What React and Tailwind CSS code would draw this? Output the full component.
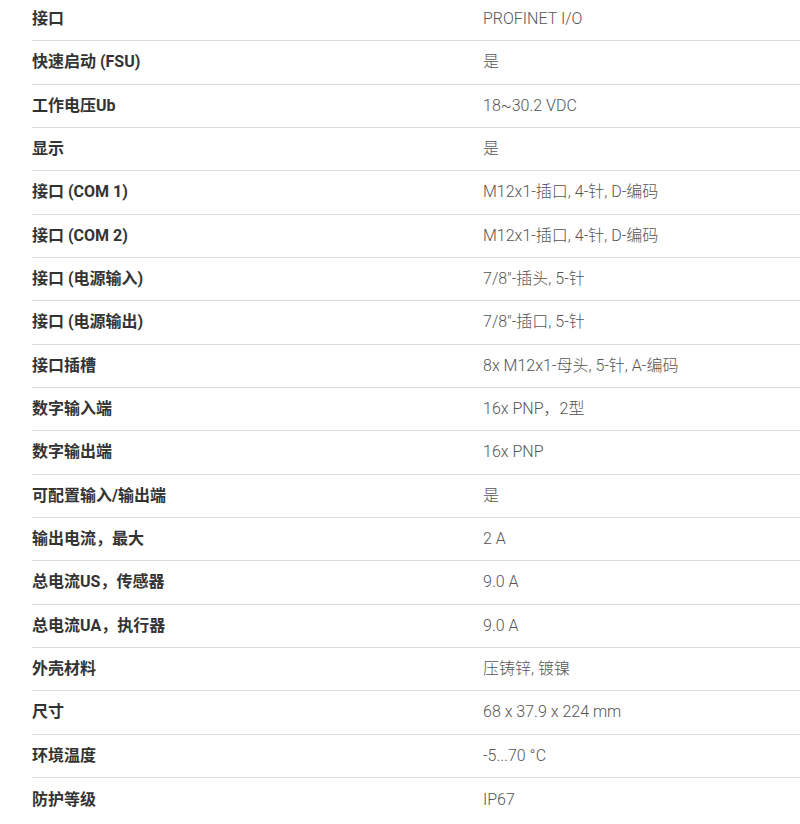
const specs = [
  ['接口', 'PROFINET I/O'],
  ['快速启动 (FSU)', '是'],
  ['工作电压Ub', '18~30.2 VDC'],
  ['显示', '是'],
  ['接口 (COM 1)', 'M12x1-插口, 4-针, D-编码'],
  ['接口 (COM 2)', 'M12x1-插口, 4-针, D-编码'],
  ['接口 (电源输入)', '7/8"-插头, 5-针'],
  ['接口 (电源输出)', '7/8"-插口, 5-针'],
  ['接口插槽', '8x M12x1-母头, 5-针, A-编码'],
  ['数字输入端', '16x PNP，2型'],
  ['数字输出端', '16x PNP'],
  ['可配置输入/输出端', '是'],
  ['输出电流，最大', '2 A'],
  ['总电流US，传感器', '9.0 A'],
  ['总电流UA，执行器', '9.0 A'],
  ['外壳材料', '压铸锌, 镀镍'],
  ['尺寸', '68 x 37.9 x 224 mm'],
  ['环境温度', '-5...70 °C'],
  ['防护等级', 'IP67'],
];

export default function App() {
  return (
    <div className="h-[824px] w-[800px] overflow-hidden bg-white font-['Roboto','Noto_Sans_CJK_SC',sans-serif] text-[16px]">
      <div className="-mt-[2px] pl-8">
        {specs.map(([label, value], i) => (
          <div
            key={label}
            className={`flex h-[43.33px] items-center ${i < specs.length - 1 ? 'border-b border-[#dcdcdc]' : ''}`}
          >
            <div className="w-[451px] font-bold text-[#333]">{label}</div>
            <div className="font-light text-[#555]">{value}</div>
          </div>
        ))}
      </div>
    </div>
  );
}
